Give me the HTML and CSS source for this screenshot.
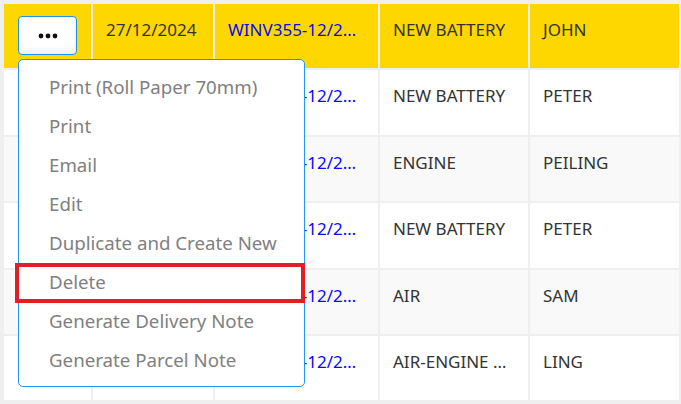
FILE: index.html
```html
<!DOCTYPE html>
<html>
<head>
<meta charset="utf-8">
<link rel="stylesheet" href="styles.css">
</head>
<body>
<div class="page">
  <div class="table">
    <div class="row hl">
      <div class="cell act"><button class="more"><svg width="20" height="6" viewBox="0 0 20 6"><circle cx="3" cy="3" r="2.4"/><circle cx="10" cy="3" r="2.4"/><circle cx="17" cy="3" r="2.4"/></svg></button></div>
      <div class="cell">27/12/2024</div>
      <div class="cell link">WINV355-12/2…</div>
      <div class="cell">NEW BATTERY</div>
      <div class="cell">JOHN</div>
      <div class="cell"></div>
    </div>
    <div class="row">
      <div class="cell"></div><div class="cell"></div>
      <div class="cell link">WINV356-12/2…</div>
      <div class="cell">NEW BATTERY</div>
      <div class="cell">PETER</div>
      <div class="cell"></div>
    </div>
    <div class="row alt">
      <div class="cell"></div><div class="cell"></div>
      <div class="cell link">WINV357-12/2…</div>
      <div class="cell">ENGINE</div>
      <div class="cell">PEILING</div>
      <div class="cell"></div>
    </div>
    <div class="row">
      <div class="cell"></div><div class="cell"></div>
      <div class="cell link">WINV358-12/2…</div>
      <div class="cell">NEW BATTERY</div>
      <div class="cell">PETER</div>
      <div class="cell"></div>
    </div>
    <div class="row alt">
      <div class="cell"></div><div class="cell"></div>
      <div class="cell link">WINV359-12/2…</div>
      <div class="cell">AIR</div>
      <div class="cell">SAM</div>
      <div class="cell"></div>
    </div>
    <div class="row">
      <div class="cell"></div><div class="cell"></div>
      <div class="cell link">WINV360-12/2…</div>
      <div class="cell">AIR-ENGINE …</div>
      <div class="cell">LING</div>
      <div class="cell"></div>
    </div>
  </div>
  <ul class="menu">
    <li>Print (Roll Paper 70mm)</li>
    <li>Print</li>
    <li>Email</li>
    <li>Edit</li>
    <li>Duplicate and Create New</li>
    <li>Delete</li>
    <li>Generate Delivery Note</li>
    <li>Generate Parcel Note</li>
  </ul>
  <div class="mark"></div>
</div>
</body>
</html>
```
FILE: styles.css
```css
html, body {
  margin: 0;
  padding: 0;
  background: #efefef;
  font-family: "Noto Sans", "Liberation Sans", sans-serif;
}
.page {
  position: relative;
  width: 681px;
  height: 404px;
  overflow: hidden;
}
.table {
  display: grid;
  grid-auto-rows: 64.4px;
  row-gap: 2px;
  padding: 4px 0 0 4px;
}
.row {
  display: grid;
  grid-template-columns: 87px 120px 163px 148px 149px 150px;
  column-gap: 2px;
}
.cell {
  background: #ffffff;
  color: #333333;
  font-size: 17px;
  line-height: 24px;
  padding: 14px 0 0 13px;
  white-space: nowrap;
  overflow: hidden;
}
.row.alt .cell { background: #f9f9f9; }
.row.hl .cell { background: #ffd700; }
.cell.link { color: #0a0af5; }
.cell.act { padding: 12px 0 0 14px; }
.more {
  width: 59px;
  height: 39px;
  background: #ffffff;
  border: 1px solid #1e90e8;
  border-radius: 4px;
  box-shadow: inset 0 -3px 6px rgba(0,0,0,0.08);
  display: flex;
  align-items: center;
  justify-content: center;
  padding: 0;
}
.more svg { fill: #111; }
.menu {
  position: absolute;
  left: 18px;
  top: 59px;
  width: 287px;
  height: 328px;
  margin: 0;
  padding: 7px 0 0 0;
  list-style: none;
  background: #ffffff;
  border: 1px solid #2196f3;
  border-radius: 5px;
  box-sizing: border-box;
}
.menu li {
  height: 39px;
  line-height: 39px;
  padding-left: 30px;
  color: #808080;
  font-size: 18.7px;
  white-space: nowrap;
}
.mark {
  position: absolute;
  left: 15px;
  top: 263px;
  width: 290px;
  height: 40px;
  border: 4px solid #e41e26;
  box-sizing: border-box;
}
```
